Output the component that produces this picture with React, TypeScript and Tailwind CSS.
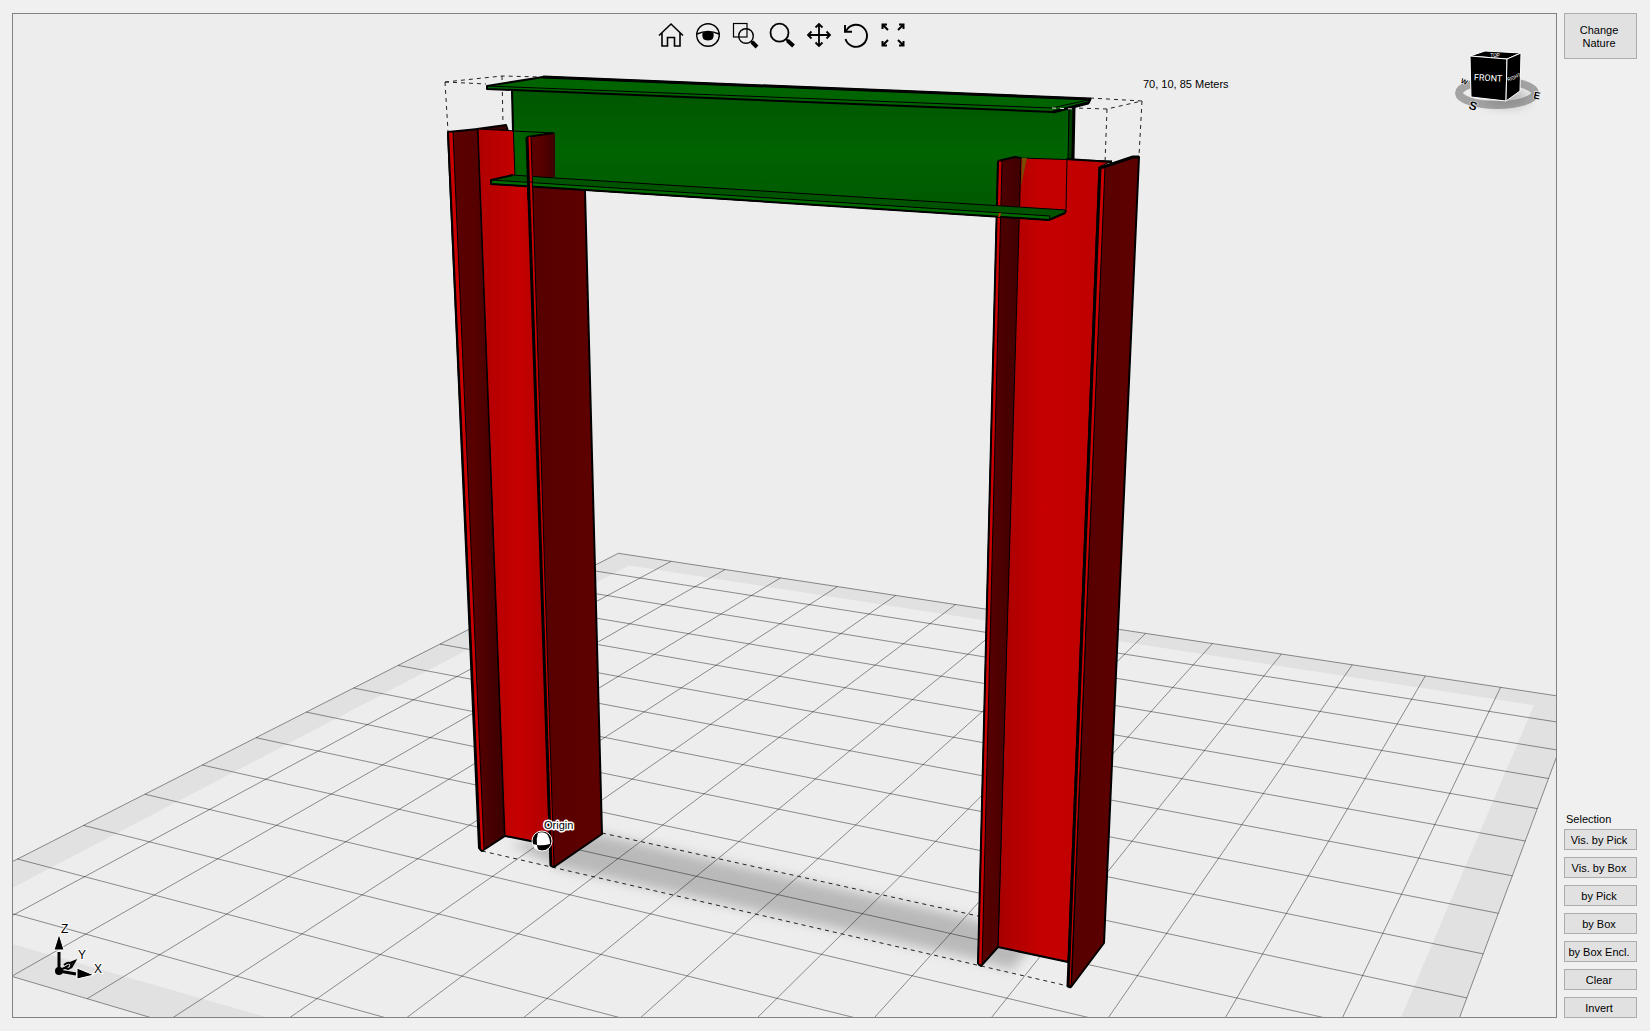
import { useState } from 'react';
import type { ReactNode } from 'react';

type Point = [number, number];

const GRID_SIZE = 15;
const GRID_MARGIN = 0.5;

// Ground plane -> screen projection
const project = (u: number, v: number): Point => {
  const w = 1 - 0.01249 * u - 0.02496 * v;
  return [(618.4 + 44.27 * u - 46.66 * v) / w, (553.3 + 0.987 * u + 2.075 * v) / w];
};

const toPoints = (list: Point[]) => list.map(([x, y]) => `${x.toFixed(1)},${y.toFixed(1)}`).join(' ');

const square = (min: number, max: number) =>
  toPoints([project(min, min), project(max, min), project(max, max), project(min, max)]);

function Grid() {
  const steps = Array.from({ length: GRID_SIZE + 1 }, (_, i) => i);

  return (
    <g>
      <polygon points={square(0, GRID_SIZE)} fill="#e1e1e1" />
      <polygon points={square(GRID_MARGIN, GRID_SIZE - GRID_MARGIN)} fill="#ededed" />
      <Shadow />
      <g stroke="#000" strokeOpacity="0.42" strokeWidth="1" fill="none">
        {steps.map((i) => (
          <polyline key={`u${i}`} points={toPoints([project(i, 0), project(i, GRID_SIZE)])} />
        ))}
        {steps.map((i) => (
          <polyline key={`v${i}`} points={toPoints([project(0, i), project(GRID_SIZE, i)])} />
        ))}
      </g>
    </g>
  );
}

function Shadow() {
  return (
    <g filter="url(#soft)">
      <polygon points="510,844 600,834 978,920 1030,948 1012,970 978,960 560,868" fill="#b9b9b9" />
    </g>
  );
}

function BoundingBox() {
  return (
    <g stroke="#222" strokeWidth="1" strokeDasharray="4 4" fill="none">
      <path d="M445 82L502 76L543 77" />
      <path d="M445 82L486 84" />
      <path d="M445 82L448 131" />
      <path d="M502 76L503 124" />
      <path d="M1090 98L1142 101L1107 109L1075 108" />
      <path d="M1142 101L1139 156" />
      <path d="M482 851L1068 986" />
      <path d="M602 833L978 916" />
    </g>
  );
}

function LeftColumn() {
  return (
    <g stroke="#000" strokeLinejoin="round">
      {/* asa trasera */}
      <polygon points="477,129 506,125 508,131 480,134" fill="#3a0000" strokeWidth="2" />
      <polygon points="448,132 478,129 505,836 482,851 479,848" fill="url(#leftFlange)" strokeWidth="2" />
      <polygon points="448,132 453,132 484,849 482,851 480,848" fill="#cc0000" strokeWidth="1" />
      <polygon points="478,129 555,133 560,846 505,836" fill="url(#leftWeb)" strokeWidth="1" />
      <path d="M505 836L550 845" strokeWidth="2" />
      <path d="M448 132L480 849L482 851" fill="none" strokeWidth="2" />
      {/* asa delantera */}
      <polygon points="529,137 553,133 584,148 585,191 602,834 554,867 551,866" fill="url(#darkFace)" strokeWidth="2" />
      <polygon points="527,137 531,137 554,866 551,866" fill="#cc0000" strokeWidth="1" />
      <path d="M527 137L551 866" strokeWidth="3" />
    </g>
  );
}

function RightColumn() {
  return (
    <g stroke="#000" strokeLinejoin="round">
      <polygon points="1020,158 1112,161 1099,167 1068,962 998,947" fill="url(#rightWeb)" strokeWidth="1" />
      <path d="M1067 159L1112 162" strokeWidth="2" />
      <path d="M998 947L1068 962" strokeWidth="2" />
      <polygon points="1104,167 1133,157 1139,157 1104,943 1071,987" fill="url(#darkFace)" strokeWidth="2" />
      <polygon points="1100,167 1105,167 1071,987 1068,986" fill="#cc0000" strokeWidth="1" />
      <path d="M1100 167L1068 986L1071 987" fill="none" strokeWidth="3" />
      <path d="M1100 168L1133 157L1139 157" fill="none" strokeWidth="3" />
      <polygon points="998,161 1015,157 1021,158 998,947 981,966 978,964" fill="url(#rightFlange)" strokeWidth="1" />
      <path d="M998 161L1015 157L1021 158M998 947L981 966L978 964" fill="none" strokeWidth="2" />
      <polygon points="998,161 1002,161 982,965 978,964" fill="#cc0000" strokeWidth="1" />
      <path d="M998 161L978 964" strokeWidth="2" />
      <path d="M1022 158L1027 158L1021 186Z" fill="#7a4a00" stroke="none" />
    </g>
  );
}

function BeamWeb() {
  return (
    <g stroke="#000" strokeLinejoin="round">
      <polygon points="1069,108 1074,107 1072,159 1067,159" fill="#003c00" strokeWidth="1" />
      <path d="M1074 107L1073 159" strokeWidth="3" />
      <polygon points="512,90 1069,108 1067,212 515,178" fill="url(#beamWeb)" strokeWidth="1" />
      <path d="M512 91L513 131" strokeWidth="2" />
      <polygon points="487,86 543,77 1090,99 1088,103 1053,112 487,89" fill="#006400" strokeWidth="2" />
      <path d="M543 77L1090 99L1088 103L1053 112" fill="none" strokeWidth="3" />
      <path d="M487 86L1052 108L1088 100" fill="none" strokeWidth="1" />
      <path d="M1052 108L1075 109" stroke="#dfdfdf" strokeWidth="1" strokeDasharray="4 4" />
    </g>
  );
}

function BeamFlange() {
  return (
    <g stroke="#000" strokeLinejoin="round">
      <polygon points="491,180 513,175 555,178 1066,210 1065,213 1049,220 491,184" fill="#005400" strokeWidth="1" />
      <polygon points="491,180 1050,216 1049,220 491,184" fill="#006c00" strokeWidth="1" />
      <path d="M513 175L491 180L491 184L1049 220L1065 213L1066 210" fill="none" strokeWidth="2" />
    </g>
  );
}

// Parts of the columns which stay in front of the beam
function FrontParts() {
  return (
    <g stroke="#000" strokeLinejoin="round">
      <path d="M512 131L555 133" strokeWidth="1" />
      <polygon points="530,137 553,133 555,134 555,177 540,180 532,181" fill="url(#leftFlange)" stroke="none" />
      <path d="M527 137L553 133" strokeWidth="2" />
    </g>
  );
}

function Strips() {
  return (
    <g>
      <polygon points="527,137 531,137 533,200 529,200" fill="#cc0000" />
      <path d="M527 137L529 200" stroke="#000" strokeWidth="3" />
      <path d="M531 137L533 200M529 182L532 182" stroke="#000" strokeWidth="1" />
      <polygon points="999,213 1001,213 1000,217 998,217" fill="#cc3300" />
      <path d="M1067 158L1066 209" stroke="#000" strokeWidth="1" />
    </g>
  );
}

function OriginMarker() {
  return (
    <g>
      <circle cx="542" cy="841" r="10" fill="#000" stroke="#fff" strokeWidth="1" />
      <path d="M538 833Q543 831 547 834Q550 838 550 844Q543 846 537 845Q536 839 538 833Z" fill="#fff" />
      <path d="M533 844L537 845Q537 848 539 850Q534 849 533 844Z" fill="#fff" />
      <text x="544" y="829" fontSize="11" fill="#000" stroke="#fff" strokeWidth="3" strokeLinejoin="round" paintOrder="stroke">
        Origin
      </text>
    </g>
  );
}

function AxisTriad() {
  return (
    <g stroke="#fff" strokeWidth="1">
      <path d="M59 971L76 974" stroke="#000" strokeWidth="3" />
      <path d="M59 971L59 952" stroke="#000" strokeWidth="3" />
      <path d="M62 969L67 967" stroke="#000" strokeWidth="2" />
      <path d="M64 965Q69 961 71 964Q72 968 68 969L65 968L69 965M70 963L75 961L71 968" fill="none" stroke="#000" strokeWidth="2" />
      <polygon points="54,950 64,950 59,934" fill="#000" />
      <polygon points="77,968 77,979 94,975" fill="#000" />
      <circle cx="59" cy="971" r="4" fill="#000" stroke="none" />
      <g fontSize="12" fill="#000" strokeWidth="2" paintOrder="stroke">
        <text x="61" y="933">Z</text>
        <text x="78" y="959">Y</text>
        <text x="94" y="973">X</text>
      </g>
    </g>
  );
}

function ViewCube() {
  return (
    <g>
      <ellipse cx="1497" cy="93" rx="38" ry="12" fill="none" stroke="#a3a3a3" strokeWidth="8" />
      <ellipse cx="1506" cy="98" rx="22" ry="8" fill="#777" opacity="0.5" filter="url(#soft)" />
      <g stroke="#fff" strokeWidth="1" strokeLinejoin="round" fill="#000">
        <polygon points="1470,56 1485,51 1521,53 1507,59" />
        <polygon points="1470,56 1507,59 1506,101 1471,97" />
        <polygon points="1507,59 1521,53 1520,91 1506,101" />
      </g>
      <g className="font-['Roboto',sans-serif]" fill="#fff" textAnchor="middle">
        <text x="1488" y="81" fontSize="9" transform="rotate(3 1488 79)">FRONT</text>
        <text x="1514" y="79" fontSize="5" transform="rotate(-22 1514 77)">RIGHT</text>
        <text x="1495" y="57" fontSize="5">TOP</text>
      </g>
      <g fill="#000" fontWeight="bold" textAnchor="middle" stroke="#fff" strokeWidth="1" paintOrder="stroke">
        <text x="1473" y="110" fontSize="12" transform="rotate(18 1473 106)">S</text>
        <text x="1537" y="99" fontSize="10" transform="rotate(12 1537 96)">E</text>
        <text x="1464" y="84" fontSize="7" transform="rotate(24 1464 82)">W</text>
      </g>
    </g>
  );
}

function Scene() {
  return (
    <svg
      viewBox="13 14 1543 1003"
      preserveAspectRatio="xMidYMid slice"
      className="absolute inset-0 h-full w-full"
      role="img"
      aria-label="Portal frame model"
    >
      <defs>
        <filter id="soft" x="-20%" y="-60%" width="140%" height="220%">
          <feGaussianBlur stdDeviation="6" />
        </filter>
        <linearGradient id="leftFlange">
          <stop offset="0" stopColor="#5c0000" />
          <stop offset="0.5" stopColor="#560000" />
          <stop offset="1" stopColor="#3a0000" />
        </linearGradient>
        <linearGradient id="rightFlange">
          <stop offset="0" stopColor="#5c0000" />
          <stop offset="1" stopColor="#400000" />
        </linearGradient>
        <linearGradient id="darkFace">
          <stop offset="0" stopColor="#560000" />
          <stop offset="1" stopColor="#5e0000" />
        </linearGradient>
        <linearGradient id="leftWeb">
          <stop offset="0" stopColor="#b00000" />
          <stop offset="0.5" stopColor="#c60000" />
          <stop offset="1" stopColor="#a80000" />
        </linearGradient>
        <linearGradient id="rightWeb">
          <stop offset="0" stopColor="#a80000" />
          <stop offset="0.4" stopColor="#c60000" />
          <stop offset="1" stopColor="#bc0000" />
        </linearGradient>
        <linearGradient id="beamWeb" x1="0" y1="0" x2="0" y2="1">
          <stop offset="0" stopColor="#005600" />
          <stop offset="0.5" stopColor="#006400" />
          <stop offset="1" stopColor="#005800" />
        </linearGradient>
      </defs>
      <Grid />
      <BoundingBox />
      <LeftColumn />
      <BeamWeb />
      <RightColumn />
      <FrontParts />
      <BeamFlange />
      <Strips />
      <path d="M1107 109L1105 163" stroke="#222" strokeWidth="1" strokeDasharray="4 4" />
      <OriginMarker />
      <AxisTriad />
      <ViewCube />
      <text x="1143" y="88" fontSize="11" fill="#000">70, 10, 85 Meters</text>
    </svg>
  );
}

interface Tool {
  name: string;
  icon: ReactNode;
}

const tools: Tool[] = [
  {
    name: 'Home',
    icon: <path d="M0 12.5L12 1L24 12.5M3 10V23H8.5V14.5H15.5V23H21V10" strokeWidth="1.6" />,
  },
  {
    name: 'View',
    icon: (
      <>
        <circle cx="12" cy="12" r="11.3" strokeWidth="1.4" />
        <path d="M1 11Q12 6 23 11" strokeWidth="1.6" />
        <path d="M6.5 9.5Q12 8 17.5 9.5Q19 17.5 12 17.5Q5 17.5 6.5 9.5Z" fill="#000" stroke="none" />
      </>
    ),
  },
  {
    name: 'Zoom window',
    icon: (
      <>
        <rect x="0.5" y="0.5" width="13.5" height="13.5" strokeWidth="1.2" />
        <circle cx="13" cy="13" r="7.3" strokeWidth="1.4" />
        <path d="M18 18L20 20" strokeWidth="2" />
        <path d="M19 19L24 24" strokeWidth="4" />
      </>
    ),
  },
  {
    name: 'Zoom',
    icon: (
      <>
        <circle cx="9.5" cy="9.7" r="9" strokeWidth="1.8" />
        <path d="M16 16L18 18" strokeWidth="2" />
        <path d="M17.5 17.5L23.5 23" strokeWidth="4" />
      </>
    ),
  },
  {
    name: 'Pan',
    icon: (
      <path
        d="M12 1V23M1 12H23M8.5 4.5L12 1L15.5 4.5M8.5 19.5L12 23L15.5 19.5M4.5 8.5L1 12L4.5 15.5M19.5 8.5L23 12L19.5 15.5"
        strokeWidth="1.8"
      />
    ),
  },
  {
    name: 'Rotate',
    icon: <path d="M1.5 16A11 11 0 1 0 3 6.5L1.5 8.5M1 2V8.8H8" strokeWidth="1.9" />,
  },
  {
    name: 'Zoom fit',
    icon: (
      <path
        d="M6 1.5H1.5V6M1.5 1.5L7 7M18 1.5H22.5V6M22.5 1.5L17 7M6 22.5H1.5V18M1.5 22.5L7 17M18 22.5H22.5V18M22.5 22.5L17 17"
        strokeWidth="2"
      />
    ),
  },
];

const selectionButtons = ['Vis. by Pick', 'Vis. by Box', 'by Pick', 'by Box', 'by Box Encl.', 'Clear', 'Invert'];

const buttonStyle =
  'w-full border border-[#adadad] bg-[#e1e1e1] pt-px pr-[3px] text-center whitespace-nowrap hover:border-[#0078d7] hover:bg-[#e5f1fb]';

export default function App() {
  const [activeTool, setActiveTool] = useState('');

  return (
    <div className="flex h-screen gap-[7px] bg-[#f0f0f0] p-3 pt-[13px] pr-[13px] pb-[13px] font-['Liberation_Sans',Arial,sans-serif] text-[11px] leading-[13px] text-black">
      <main className="relative min-w-0 flex-1 overflow-hidden border border-[#828282] bg-[#ededed]">
        <Scene />
        <div role="toolbar" aria-label="View tools" className="relative flex justify-center gap-[13px] pt-[9px] pr-1.5">
          {tools.map((tool) => (
            <button
              key={tool.name}
              type="button"
              aria-label={tool.name}
              aria-pressed={activeTool === tool.name}
              onClick={() => setActiveTool(tool.name)}
            >
              <svg viewBox="0 0 24 24" className="size-6 overflow-visible" fill="none" stroke="#000">
                {tool.icon}
              </svg>
            </button>
          ))}
        </div>
      </main>

      <aside className="flex w-[73px] shrink-0 flex-col justify-between">
        <button type="button" className={`h-[46px] ${buttonStyle}`}>
          Change
          <br />
          Nature
        </button>

        <section aria-labelledby="selection-title">
          <h2 id="selection-title" className="mb-[3px] pl-0.5">Selection</h2>
          <div className="flex flex-col gap-[7px]">
            {selectionButtons.map((label) => (
              <button key={label} type="button" className={`h-[21px] ${buttonStyle}`}>
                {label}
              </button>
            ))}
          </div>
        </section>
      </aside>
    </div>
  );
}
